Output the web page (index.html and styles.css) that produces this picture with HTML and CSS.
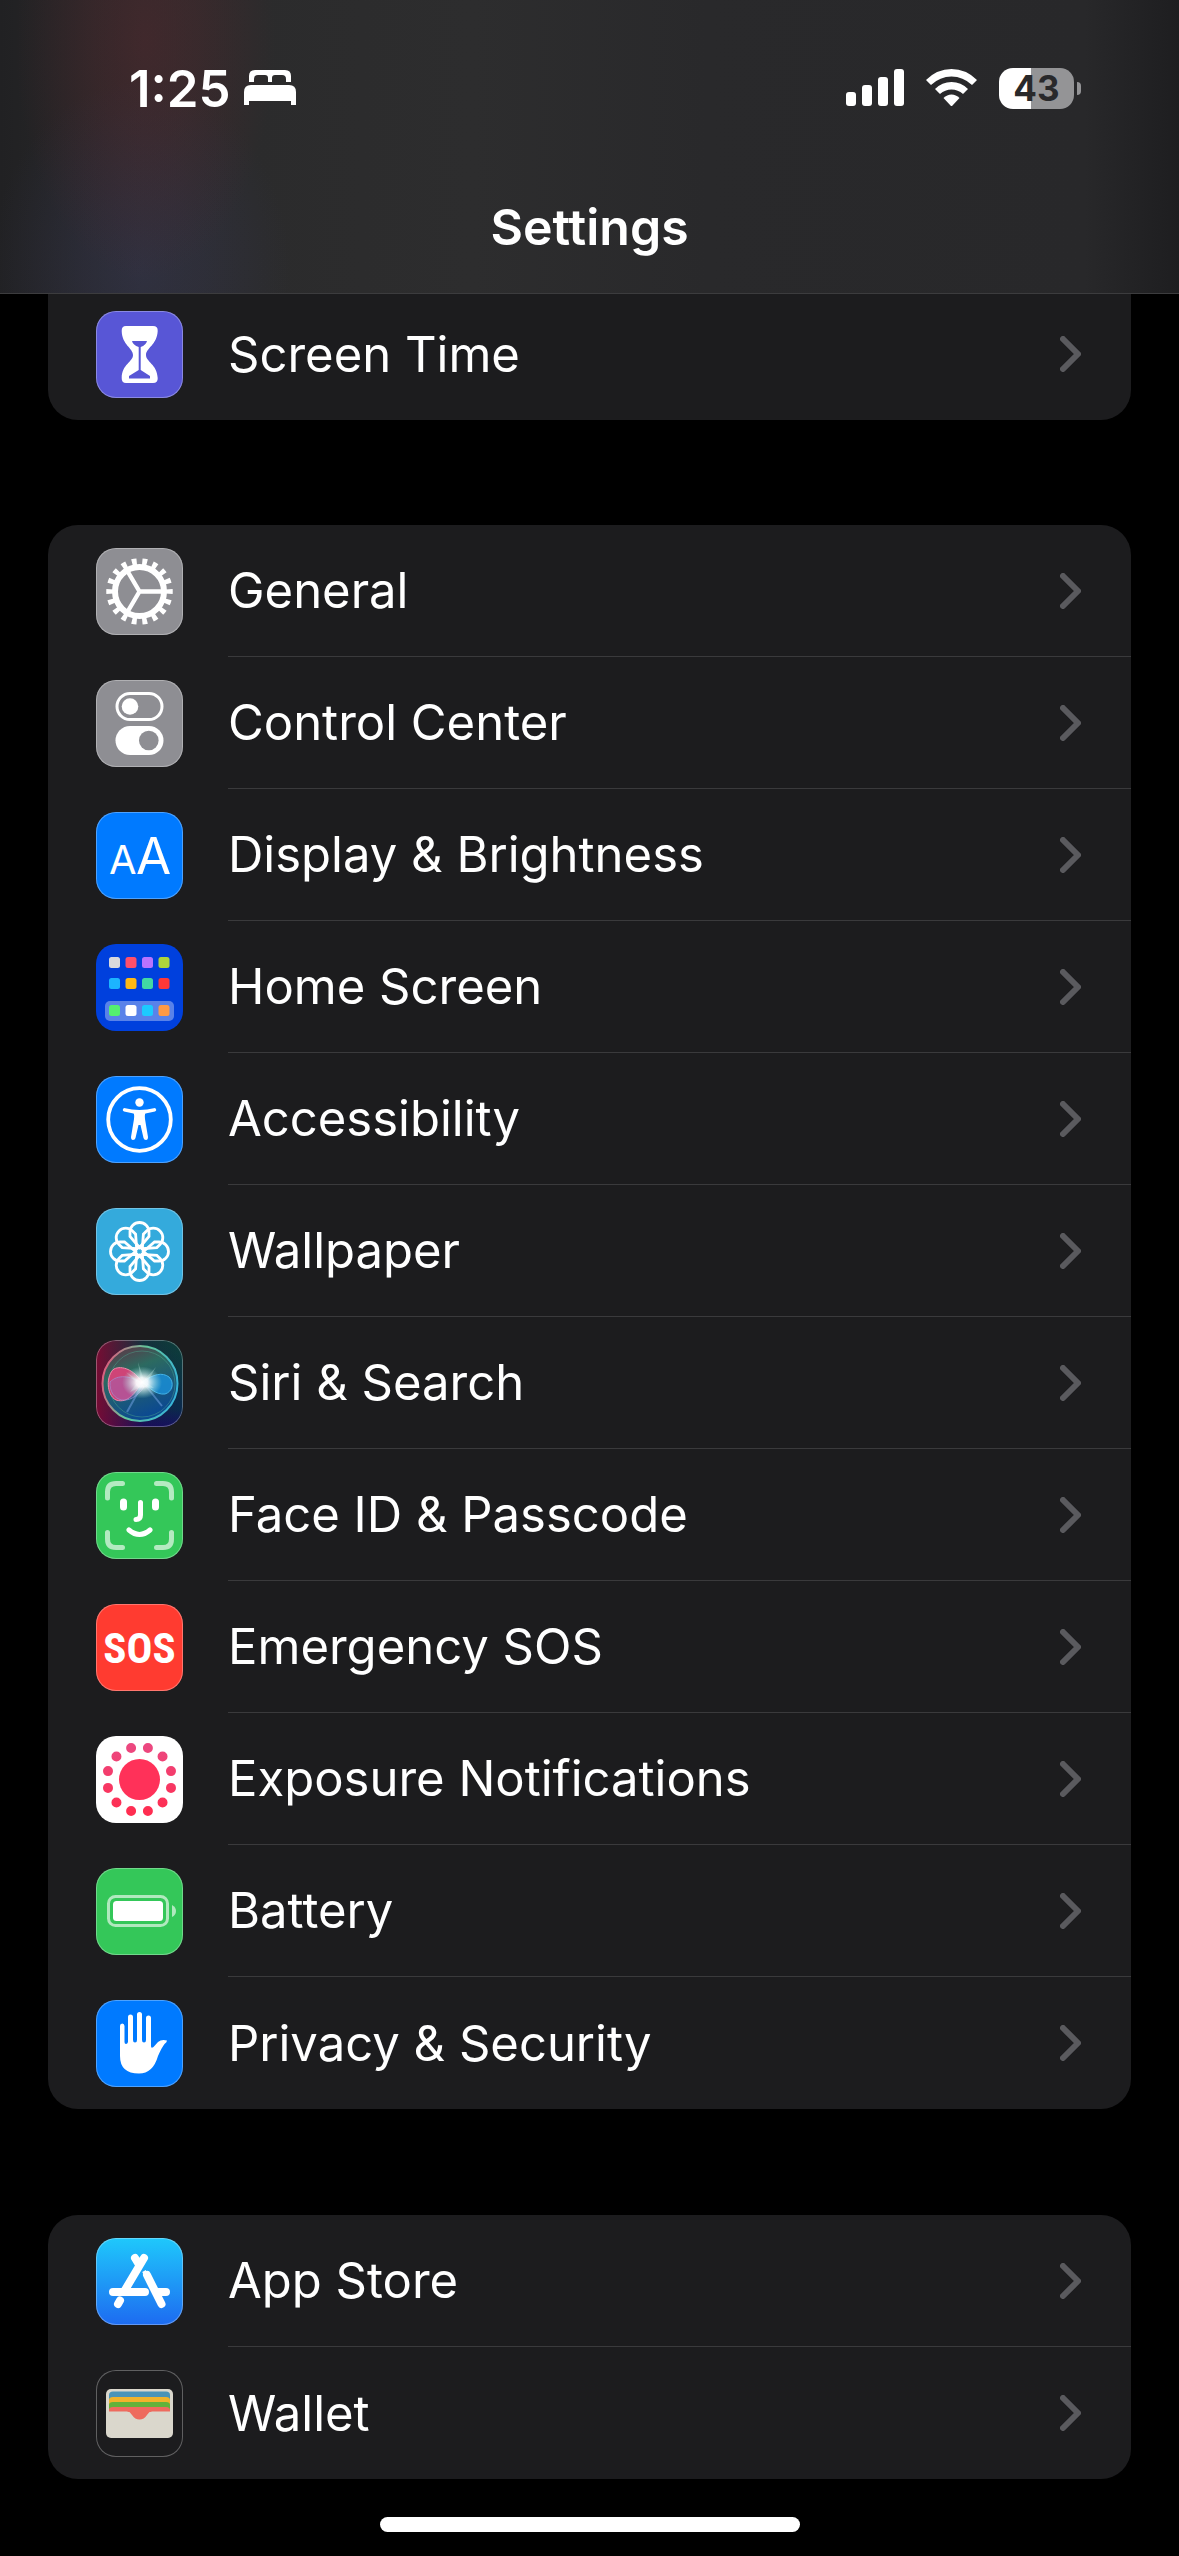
FILE: index.html
```html
<!DOCTYPE html>
<html lang="en">
<head>
  <meta charset="utf-8">
  <meta name="viewport" content="width=device-width">
  <title>Settings</title>
  <link rel="stylesheet" href="styles.css">
</head>
<body>
  <header class="topbar">
    <div class="status">
      <div class="status-left">
        <time>1:25</time>
        <svg width="52" height="36" viewBox="0 0 52 36" fill="#fff" aria-hidden="true">
          <path d="M5 12V6Q5 0 11 0H41Q47 0 47 6V12H42V9Q42 5 38 5H31Q28 5 28 8V12H24V8Q24 5 21 5H14Q10 5 10 9V12Z"/>
          <path d="M0 22Q0 15 7 15H45Q52 15 52 22V35H47V31H5V35H0Z"/>
        </svg>
      </div>
      <div class="status-right">
        <svg width="58" height="38" viewBox="0 0 58 38" fill="#fff" aria-hidden="true">
          <rect x="0" y="23" width="10" height="14" rx="3"/>
          <rect x="16" y="16" width="10" height="21" rx="3"/>
          <rect x="32" y="8" width="10" height="29" rx="3"/>
          <rect x="48" y="0" width="10" height="37" rx="3"/>
        </svg>
        <svg width="51" height="38" viewBox="0 0 51 38" fill="#fff" aria-hidden="true">
          <path d="M0 11Q11 0 25.500 0T51 11L46 16Q37 7.500 25.500 7.500T5 16Z"/>
          <path d="M9 20Q16 13 25.500 13T42 20L37 25Q32 20.500 25.500 20.500T14 25Z"/>
          <path d="M17.500 29Q21 25.500 25.500 25.500T33.500 29L26.500 36.500Q25.500 37.500 24.500 36.500Z"/>
        </svg>
        <div class="charge"><span class="charge-level">43</span><span class="charge-tip"></span></div>
      </div>
    </div>
    <h1>Settings</h1>
  </header>

  <main>
    <ul class="group group-first">
      <li><a class="row" href="#screen-time">
        <svg class="icon" viewBox="0 0 87 87" style="background:#5856d6" aria-hidden="true">
          <path fill="#fff" d="M30 15H57Q62 15 61.700 20C61 34 50 37 50 44C50 51 61 53 61.700 67Q62 72 57 72H30Q25.500 72 25.700 67C26 53 37 51 37 44C37 37 26 34 25.700 20Q25.500 15 30 15Z"/>
          <path fill="#5856d6" d="M36 30H51Q50 34 44.700 36V59L54 65V67.500H33V65L42.700 59V36Q37 34 36 30Z"/>
        </svg>
        <span class="row-body">Screen Time <svg class="chevron" viewBox="0 0 21 36"><path d="M3 3L18 18L3 33"/></svg></span>
      </a></li>
    </ul>

    <ul class="group">
      <li><a class="row" href="#general">
        <svg class="icon" viewBox="0 0 87 87" style="background:#8e8e93" aria-hidden="true">
          <g fill="none" stroke="#fff">
            <circle cx="43.500" cy="43.500" r="29.500" stroke-width="7.500" pathLength="180" stroke-dasharray="4.600 5.400" stroke-dashoffset="2.300"/>
            <circle cx="43.500" cy="43.500" r="24.500" stroke-width="6"/>
            <path d="M43.500 43.500H66M43.500 43.500L32 24M43.500 43.500L32 63" stroke-width="4.400"/>
          </g>
        </svg>
        <span class="row-body">General <svg class="chevron" viewBox="0 0 21 36"><path d="M3 3L18 18L3 33"/></svg></span>
      </a></li>
      <li><a class="row" href="#control-center">
        <svg class="icon" viewBox="0 0 87 87" style="background:#8e8e93" aria-hidden="true">
          <rect x="21" y="13.500" width="45" height="26" rx="13" fill="none" stroke="#fff" stroke-width="3"/>
          <circle cx="34" cy="26.500" r="8.300" fill="#fff"/>
          <rect x="19.500" y="46" width="48" height="29" rx="14.500" fill="#fff"/>
          <circle cx="52.800" cy="60.500" r="9.800" fill="#8e8e93"/>
        </svg>
        <span class="row-body">Control Center <svg class="chevron" viewBox="0 0 21 36"><path d="M3 3L18 18L3 33"/></svg></span>
      </a></li>
      <li><a class="row" href="#display">
        <svg class="icon" viewBox="0 0 87 87" style="background:#007aff" aria-hidden="true">
          <text class="glyph" x="13" y="62" font-size="40">A</text>
          <text class="glyph" x="40" y="62" font-size="51">A</text>
        </svg>
        <span class="row-body">Display &amp; Brightness <svg class="chevron" viewBox="0 0 21 36"><path d="M3 3L18 18L3 33"/></svg></span>
      </a></li>
      <li><a class="row" href="#home-screen">
        <svg class="icon icon-flat" viewBox="0 0 87 87" style="background:#0040dd" aria-hidden="true">
          <rect x="9" y="57" width="69" height="20" rx="5" fill="#fff" fill-opacity=".35"/>
          <rect x="13" y="13" width="11" height="11" rx="2.500" fill="#d8d8dc"/>
          <rect x="29.500" y="13" width="11" height="11" rx="2.500" fill="#ff4f6b"/>
          <rect x="46" y="13" width="11" height="11" rx="2.500" fill="#b873ff"/>
          <rect x="62.500" y="13" width="11" height="11" rx="2.500" fill="#aed53c"/>
          <rect x="13" y="34" width="11" height="11" rx="2.500" fill="#1cb4ff"/>
          <rect x="29.500" y="34" width="11" height="11" rx="2.500" fill="#ffb914"/>
          <rect x="46" y="34" width="11" height="11" rx="2.500" fill="#41d8a4"/>
          <rect x="62.500" y="34" width="11" height="11" rx="2.500" fill="#ff3838"/>
          <rect x="13" y="61" width="11" height="11" rx="2.500" fill="#54f070"/>
          <rect x="29.500" y="61" width="11" height="11" rx="2.500" fill="#fff"/>
          <rect x="46" y="61" width="11" height="11" rx="2.500" fill="#1ccaff"/>
          <rect x="62.500" y="61" width="11" height="11" rx="2.500" fill="#ff9a45"/>
        </svg>
        <span class="row-body">Home Screen <svg class="chevron" viewBox="0 0 21 36"><path d="M3 3L18 18L3 33"/></svg></span>
      </a></li>
      <li><a class="row" href="#accessibility">
        <svg class="icon" viewBox="0 0 87 87" style="background:#007aff" aria-hidden="true">
          <circle cx="43.500" cy="43.500" r="31.300" fill="none" stroke="#fff" stroke-width="3.800"/>
          <circle cx="43.500" cy="26.500" r="4.200" fill="#fff"/>
          <path fill="#fff" d="M28 32Q36 34 43.500 34T59 32Q61.500 34 59 35.500L49.500 37.500Q48.500 38 49 43L52 61Q52 64 50 64Q48 64 47.500 62L44.500 49H42.500L39.500 62Q39 64 37 64Q35 64 35 61L38 43Q38.500 38 37.500 37.500L28 35.500Q25.500 34 28 32Z"/>
        </svg>
        <span class="row-body">Accessibility <svg class="chevron" viewBox="0 0 21 36"><path d="M3 3L18 18L3 33"/></svg></span>
      </a></li>
      <li><a class="row" href="#wallpaper">
        <svg class="icon" viewBox="0 0 87 87" style="background:#34aadc" aria-hidden="true">
          <defs><path id="petal" d="M0 -4L-9.500 -15V-19.500A9.500 9.500 0 0 1 9.500 -19.500V-15Z"/></defs>
          <g transform="translate(43.500 43.500)" fill="none" stroke="#fff" stroke-width="2.800">
            <circle r="4"/>
            <use href="#petal"/>
            <use href="#petal" transform="rotate(45)"/>
            <use href="#petal" transform="rotate(90)"/>
            <use href="#petal" transform="rotate(135)"/>
            <use href="#petal" transform="rotate(180)"/>
            <use href="#petal" transform="rotate(225)"/>
            <use href="#petal" transform="rotate(270)"/>
            <use href="#petal" transform="rotate(315)"/>
          </g>
        </svg>
        <span class="row-body">Wallpaper <svg class="chevron" viewBox="0 0 21 36"><path d="M3 3L18 18L3 33"/></svg></span>
      </a></li>
      <li><a class="row" href="#siri">
        <svg class="icon icon-siri" viewBox="0 0 87 87" aria-hidden="true">
          <defs>
            <linearGradient id="orb" x1="0" y1="0" x2=".4" y2="1">
              <stop offset="0" stop-color="#6a2a40"/>
              <stop offset=".4" stop-color="#2c6a60"/>
              <stop offset="1" stop-color="#0c4a90"/>
            </linearGradient>
            <linearGradient id="rim" x1="0" y1=".3" x2="1" y2=".6">
              <stop offset="0" stop-color="#e0587c"/>
              <stop offset=".45" stop-color="#63c49a"/>
              <stop offset="1" stop-color="#37b4d8"/>
            </linearGradient>
            <radialGradient id="flare">
              <stop offset="0" stop-color="#fff"/>
              <stop offset=".3" stop-color="#fff" stop-opacity=".9"/>
              <stop offset="1" stop-color="#a0e8dc" stop-opacity="0"/>
            </radialGradient>
          </defs>
          <circle cx="44" cy="43.500" r="37.500" fill="url(#orb)" stroke="url(#rim)" stroke-width="2"/>
          <circle cx="46" cy="44" r="33" fill="none" stroke="#4ea890" stroke-opacity=".45"/>
          <path d="M46 42C38 30 26 25 18 29C10 35 10 55 20 60C32 64 40 52 46 42Z" fill="#e0407a" fill-opacity=".9" stroke="#f58bab"/>
          <path d="M44 42C34 36 22 34 14 42C13 62 34 68 48 47Z" fill="#8d70c8" fill-opacity=".35" stroke="#a29ae0" stroke-opacity=".6"/>
          <path d="M46 42C58 34 66 32 73 37C79 43 76 52 69 54C60 55 54 48 46 42Z" fill="#1a8bd0" fill-opacity=".9" stroke="#43b3e8"/>
          <path d="M46 45L31 72M50 46L66 66" stroke="#76a5e8" stroke-opacity=".5" stroke-width="2"/>
          <path d="M45 42L42 22L48 40L60 27L51 43L58 48L45 47L34 52L41 43L30 32Z" fill="#d8fff4" fill-opacity=".3"/>
          <ellipse cx="46" cy="42.500" rx="20" ry="16" fill="url(#flare)"/>
        </svg>
        <span class="row-body">Siri &amp; Search <svg class="chevron" viewBox="0 0 21 36"><path d="M3 3L18 18L3 33"/></svg></span>
      </a></li>
      <li><a class="row" href="#face-id">
        <svg class="icon" viewBox="0 0 87 87" style="background:#34c759" aria-hidden="true">
          <path fill="none" stroke="#b4eac1" stroke-width="5" stroke-linecap="round" d="M11.500 26V20Q11.500 11.500 20 11.500H26.500M60.500 11.500H67Q75.500 11.500 75.500 20V26M75.500 60.500V67Q75.500 75.500 67 75.500H60.500M26.500 75.500H20Q11.500 75.500 11.500 67V60.500"/>
          <rect x="24" y="26.500" width="7" height="12" rx="3.500" fill="#fff"/>
          <rect x="56" y="26.500" width="7" height="12" rx="3.500" fill="#fff"/>
          <path fill="none" stroke="#fff" stroke-width="5" stroke-linecap="round" d="M44.500 30.500V43Q44.500 47.500 40 47.500M33 58Q43.500 67 54 58"/>
        </svg>
        <span class="row-body">Face ID &amp; Passcode <svg class="chevron" viewBox="0 0 21 36"><path d="M3 3L18 18L3 33"/></svg></span>
      </a></li>
      <li><a class="row" href="#sos">
        <svg class="icon" viewBox="0 0 87 87" style="background:#ff3b30" aria-hidden="true">
          <text class="sos" x="43.500" y="59">SOS</text>
        </svg>
        <span class="row-body">Emergency SOS <svg class="chevron" viewBox="0 0 21 36"><path d="M3 3L18 18L3 33"/></svg></span>
      </a></li>
      <li><a class="row" href="#exposure">
        <svg class="icon icon-flat" viewBox="0 0 87 87" style="background:#fff" aria-hidden="true">
          <defs>
            <linearGradient id="exposure-dots" x1="0" y1="0" x2="0" y2="1">
              <stop offset="0" stop-color="#ec4880"/>
              <stop offset="1" stop-color="#ff2d50"/>
            </linearGradient>
          </defs>
          <circle cx="43.500" cy="43.500" r="20.500" fill="#ff3159"/>
          <circle cx="43.500" cy="43.500" r="32.600" fill="none" stroke="url(#exposure-dots)" stroke-width="10" stroke-linecap="round" pathLength="120" stroke-dasharray="0 10" stroke-dashoffset="5"/>
        </svg>
        <span class="row-body">Exposure Notifications <svg class="chevron" viewBox="0 0 21 36"><path d="M3 3L18 18L3 33"/></svg></span>
      </a></li>
      <li><a class="row" href="#battery">
        <svg class="icon" viewBox="0 0 87 87" style="background:#34c759" aria-hidden="true">
          <rect x="12.500" y="28.500" width="59" height="29" rx="7" fill="none" stroke="#b0e9be" stroke-width="3"/>
          <rect x="17" y="33" width="50" height="20" rx="3.500" fill="#fff"/>
          <path d="M76 37Q80 39 80 43T76 49Z" fill="#b0e9be"/>
        </svg>
        <span class="row-body">Battery <svg class="chevron" viewBox="0 0 21 36"><path d="M3 3L18 18L3 33"/></svg></span>
      </a></li>
      <li><a class="row" href="#privacy">
        <svg class="icon" viewBox="0 0 87 87" style="background:#007aff" aria-hidden="true">
          <path fill="#fff" d="M24 26Q24 23.500 26.200 23.500T28.500 26V42Q28.500 44 30 44T32 42V17Q32 14.500 34.500 14.500T37 17V40Q37 42.500 39 42.500T41 40V14.500Q41 12 43.500 12T46 14.500V40Q46 42.500 48 42.500T50 40V18Q50 15.500 52.500 15.500T55 18V46Q55 49 57.500 47L62 42Q65.500 39 71 40.500Q71 42 68.500 44Q66 47 62 56Q57 73.500 43 73.500Q24 73.500 24 56Z"/>
        </svg>
        <span class="row-body">Privacy &amp; Security <svg class="chevron" viewBox="0 0 21 36"><path d="M3 3L18 18L3 33"/></svg></span>
      </a></li>
    </ul>

    <ul class="group">
      <li><a class="row" href="#app-store">
        <svg class="icon icon-store" viewBox="0 0 87 87" aria-hidden="true">
          <g stroke="#fff" stroke-width="8" stroke-linecap="round">
            <path d="M39 20L42 25M48 20L29 52M51 37L65.500 66M24 62.500L22 66M17 54H49M62 54H70"/>
          </g>
          <path d="M48 33L61 58" stroke="#fff" stroke-width="4"/>
        </svg>
        <span class="row-body">App Store <svg class="chevron" viewBox="0 0 21 36"><path d="M3 3L18 18L3 33"/></svg></span>
      </a></li>
      <li><a class="row" href="#wallet">
        <svg class="icon" viewBox="0 0 87 87" style="background:#1c1c1e" aria-hidden="true">
          <rect x="10" y="19" width="67" height="49" rx="5" fill="#dad7cc"/>
          <path d="M13 25Q13 21.500 17 21.500H70Q74 21.500 74 25V42H13Z" fill="#4a94b8"/>
          <path d="M13 30Q13 27 17 27H70Q74 27 74 30V42H13Z" fill="#f0b32c"/>
          <path d="M13 35Q13 32 17 32H70Q74 32 74 35V42H13Z" fill="#62b23a"/>
          <path d="M13 40Q13 37 17 37H70Q74 37 74 40V42H13Z" fill="#ee6b5e"/>
          <path d="M10 41.500H31Q34 41.500 36 45Q39 49.500 43.500 49.500T51 45Q53 41.500 56 41.500H77V50H10Z" fill="#dad7cc"/>
          <path d="M31 41Q34 41.500 36 45Q39 49.500 43.500 49.500T51 45Q53 41.500 56 41Z" fill="#ee6b5e"/>
        </svg>
        <span class="row-body">Wallet <svg class="chevron" viewBox="0 0 21 36"><path d="M3 3L18 18L3 33"/></svg></span>
      </a></li>
    </ul>
  </main>
  <div class="home-bar"></div>
</body>
</html>
```

FILE: styles.css
```css
* { box-sizing: border-box; }
body { margin: 0; background: #000; color: #fff; font-family: Inter,"Liberation Sans",sans-serif; font-size: 49px; }
ul { list-style: none; margin: 0; padding: 0; }
svg { display: block; flex: none; }

/* header, stays over the list while it scrolls */
.topbar {
  position: sticky;
  top: 0;
  z-index: 1;
  padding-bottom: 15px;
  border-bottom: 1px solid #3c3c3e;
  background:
    radial-gradient(ellipse 130px 240px at 145px 40px, rgba(100,38,46,.38), rgba(100,38,46,.26) 40%, transparent),
    radial-gradient(ellipse 150px 190px at 140px 270px, rgba(58,60,100,.36), rgba(58,60,100,.24) 40%, transparent),
    linear-gradient(to right, #212123, #2a2a2b 12%, #2d2d2e 40%, #29292b 60%, #28282a 92%, #1e1e20);
}
.status { display: flex; justify-content: space-between; align-items: center; height: 176px; padding: 0 98px 0 129px; }
.status-left { display: flex; align-items: center; gap: 13px; font-size: 51px; font-weight: 600; }
.status-right { display: flex; align-items: center; gap: 22px; }
h1 { margin: 0; font-size: 50px; font-weight: 600; line-height: 102px; text-align: center; }

.charge { display: flex; align-items: center; gap: 3px; }
.charge-level {
  width: 75px;
  border-radius: 14px;
  background: linear-gradient(to right, #fff 32px, #949496 32px);
  color: #29292b;
  font-size: 35px;
  font-weight: 700;
  line-height: 41px;
  text-align: center;
}
.charge-tip { width: 4px; height: 13px; border-radius: 0 4px 4px 0; background: #949496; }

/* list groups */
.group { margin: 0 48px 106px; border-radius: 30px; background: #1c1c1e; }
.group-first { margin-top: -6px; margin-bottom: 105px; border-radius: 0 0 30px 30px; }
.row { display: flex; align-items: center; gap: 45px; padding-left: 48px; color: inherit; text-decoration: none; }
.row-body { display: flex; flex: 1; justify-content: space-between; align-items: center; height: 132px; padding-right: 50px; border-bottom: 1px solid #3a3a3c; }
li:last-child .row-body { border-bottom: 0; }
.chevron { width: 21px; height: 36px; fill: none; stroke: #5a5a5e; stroke-width: 6; stroke-linecap: round; stroke-linejoin: round; }

/* app icons */
.icon { width: 87px; height: 87px; border-radius: 20px; box-shadow: 0 0 0 1px rgba(255,255,255,.3) inset; fill: none; }
.icon-flat { box-shadow: none; }
.icon-siri { background: linear-gradient(to right, rgba(130,8,50,.9), rgba(40,10,70,.3) 55%, transparent), linear-gradient(#0c4038, #0a2a4c 80%, #141060); }
.icon-store { background: linear-gradient(#1fc8fb, #1d6bf1); }
.glyph { fill: #fff; font-weight: 400; }
.sos { fill: #fff; font-family: "Roboto Condensed","Liberation Sans Narrow",Roboto,sans-serif; font-size: 43px; font-weight: 700; text-anchor: middle; }

.home-bar { position: fixed; bottom: 24px; left: 50%; z-index: 1; width: 420px; height: 15px; margin-left: -210px; border-radius: 8px; background: #fff; }
```
